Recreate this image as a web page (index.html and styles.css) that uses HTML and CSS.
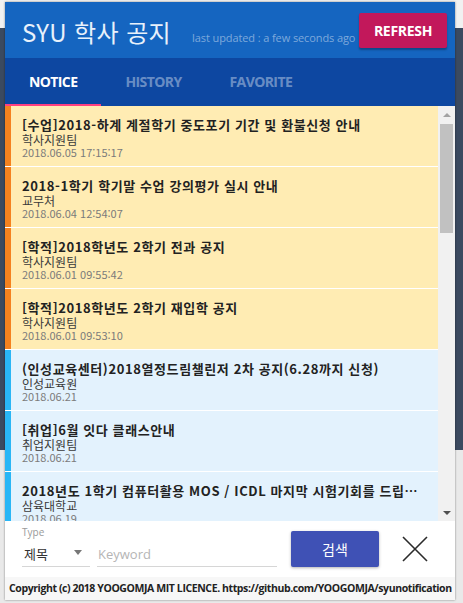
FILE: index.html
```html
<!DOCTYPE html>
<html lang="ko">
<head>
<meta charset="utf-8">
<title>SYU 학사 공지</title>
<link rel="stylesheet" href="styles.css">
</head>
<body>
<div class="popup">
  <header class="appbar">
    <div class="brand">
      <h1 class="title">SYU 학사 공지</h1>
      <span class="updated">last updated : a few seconds ago</span>
    </div>
    <button class="refresh">REFRESH</button>
  </header>
  <nav class="tabs">
    <div class="tab active">NOTICE</div>
    <div class="tab">HISTORY</div>
    <div class="tab">FAVORITE</div>
  </nav>
  <div class="listwrap">
    <ul class="list">
      <li class="item new">
        <div class="item-title">[수업]2018-하계 계절학기 중도포기 기간 및 환불신청 안내</div>
        <div class="item-dept">학사지원팀</div>
        <div class="item-date">2018.06.05 17:15:17</div>
      </li>
      <li class="item new">
        <div class="item-title">2018-1학기 학기말 수업 강의평가 실시 안내</div>
        <div class="item-dept">교무처</div>
        <div class="item-date">2018.06.04 12:54:07</div>
      </li>
      <li class="item new">
        <div class="item-title">[학적]2018학년도 2학기 전과 공지</div>
        <div class="item-dept">학사지원팀</div>
        <div class="item-date">2018.06.01 09:55:42</div>
      </li>
      <li class="item new">
        <div class="item-title">[학적]2018학년도 2학기 재입학 공지</div>
        <div class="item-dept">학사지원팀</div>
        <div class="item-date">2018.06.01 09:53:10</div>
      </li>
      <li class="item old">
        <div class="item-title">(인성교육센터)2018열정드림챌린저 2차 공지(6.28까지 신청)</div>
        <div class="item-dept">인성교육원</div>
        <div class="item-date">2018.06.21</div>
      </li>
      <li class="item old">
        <div class="item-title">[취업]6월 잇다 클래스안내</div>
        <div class="item-dept">취업지원팀</div>
        <div class="item-date">2018.06.21</div>
      </li>
      <li class="item old">
        <div class="item-title">2018년도 1학기 컴퓨터활용 MOS / ICDL 마지막 시험기회를 드립니다</div>
        <div class="item-dept">삼육대학교</div>
        <div class="item-date">2018.06.19</div>
      </li>
    </ul>
    <div class="scrollbar">
      <div class="sb-btn"><span class="tri-up"></span></div>
      <div class="sb-track"><div class="sb-thumb"></div></div>
      <div class="sb-btn"><span class="tri-down"></span></div>
    </div>
  </div>
  <div class="search">
    <div class="field type-field">
      <label class="field-label">Type</label>
      <div class="select">
        <span class="select-value">제목</span>
        <span class="select-arrow"></span>
      </div>
    </div>
    <div class="field keyword-field">
      <div class="input">Keyword</div>
    </div>
    <button class="search-btn">검색</button>
    <button class="close-btn" aria-label="close">
      <svg width="26" height="26" viewBox="0 0 26 26">
        <path d="M1 1 L25 25 M25 1 L1 25" stroke="#2b2b2b" stroke-width="1.6" fill="none"/>
      </svg>
    </button>
  </div>
  <footer class="copy">Copyright (c) 2018 YOOGOMJA MIT LICENCE. https://github.com/YOOGOMJA/syunotification</footer>
</div>
</body>
</html>
```

FILE: styles.css
```css
* { box-sizing: border-box; }

html, body {
  margin: 0;
  height: 603px;
  overflow: hidden;
}

body {
  padding: 2px 0 0 5px;
  font-family: "Noto Sans CJK KR", "Noto Sans", sans-serif;
  background: linear-gradient(to bottom, #f1f1f1 0, #f1f1f1 28px, #3b4a60 28px, #3b4a60 450px, #e9e9e9 450px);
}

.popup {
  width: 450px;
  height: 598px;
  background: #fff;
  display: flex;
  flex-direction: column;
  box-shadow: 0 0 2px rgba(0, 0, 0, 0.45);
}

/* header */
.appbar {
  height: 56px;
  flex: none;
  background: #1565c0;
  display: flex;
  align-items: center;
  padding: 0 8px 0 17px;
}

.brand {
  flex: none;
  display: flex;
  align-items: baseline;
  white-space: nowrap;
  margin-top: 3px;
}

.title {
  margin: 0;
  font-size: 24px;
  font-weight: 400;
  line-height: 28px;
  letter-spacing: 0.4px;
  color: #e8f1fb;
}

.updated {
  margin-left: 21px;
  font-size: 11px;
  color: rgba(255, 255, 255, 0.45);
  font-family: "Open Sans", "Noto Sans", sans-serif;
  letter-spacing: -0.1px;
}

.refresh {
  margin-left: auto;
  flex: none;
  width: 88px;
  height: 35px;
  border: none;
  border-radius: 2px;
  background: #c2185b;
  color: #fff;
  font-family: "Open Sans", sans-serif;
  font-weight: 700;
  font-size: 14px;
  letter-spacing: -0.3px;
  box-shadow: 0 2px 2px rgba(0, 0, 0, 0.3);
  padding: 0;
}

/* tabs */
.tabs {
  height: 48px;
  flex: none;
  background: #0d47a1;
  display: flex;
}

.tab {
  padding: 0 24px;
  height: 48px;
  line-height: 48px;
  font-family: "Open Sans", sans-serif;
  font-weight: 700;
  font-size: 14px;
  letter-spacing: -0.6px;
  color: rgba(255, 255, 255, 0.4);
}

.tab.active {
  color: #fff;
  border-bottom: 2px solid #ff4081;
}

/* list */
.listwrap {
  height: 415px;
  flex: none;
  display: flex;
}

.list {
  flex: 1;
  margin: 0;
  padding: 0;
  list-style: none;
  overflow: hidden;
  background: #fff;
}

.item {
  height: 60px;
  margin-bottom: 1px;
  border-left: 6px solid;
  padding: 11px 20px 0 11px;
}

.item.new {
  background: #ffecb3;
  border-left-color: #f5821f;
}

.item.old {
  background: #e3f2fd;
  border-left-color: #29b6f6;
}

.item-title {
  font-size: 13px;
  font-weight: 700;
  line-height: 16px;
  letter-spacing: 0.6px;
  color: #222;
  white-space: nowrap;
  overflow-x: clip;
  overflow-y: visible;
  text-overflow: ellipsis;
}

.item-dept {
  font-size: 12px;
  line-height: 13px;
  color: #3a3a3a;
}

.item-date {
  font-size: 11px;
  line-height: 12px;
  color: #7b7b7b;
}

/* fake scrollbar */
.scrollbar {
  width: 17px;
  flex: none;
  background: #f1f1f1;
  display: flex;
  flex-direction: column;
}

.sb-btn {
  height: 17px;
  flex: none;
  display: flex;
  align-items: center;
  justify-content: center;
}

.tri-up {
  width: 0;
  height: 0;
  border-left: 4px solid transparent;
  border-right: 4px solid transparent;
  border-bottom: 4px solid #a3a3a3;
}

.tri-down {
  width: 0;
  height: 0;
  border-left: 4px solid transparent;
  border-right: 4px solid transparent;
  border-top: 4px solid #505050;
}

.sb-track {
  flex: 1;
  padding: 1px 2px 0;
}

.sb-thumb {
  height: 109px;
  background: #c1c1c1;
}

/* search row */
.search {
  height: 56px;
  flex: none;
  display: flex;
  align-items: center;
  padding-left: 17px;
}

.field {
  display: flex;
  flex-direction: column;
  margin-bottom: 5px;
}

.type-field {
  width: 68px;
}

.field-label {
  font-family: "Open Sans", sans-serif;
  font-size: 10px;
  line-height: 12px;
  color: #9a9a9a;
  height: 12px;
}

.select {
  height: 29px;
  display: flex;
  align-items: center;
  border-bottom: 1px solid #d6d6d6;
  padding: 2px 8px 0 2px;
}

.select-value {
  font-size: 13px;
  color: #333;
}

.select-arrow {
  margin-left: auto;
  width: 0;
  height: 0;
  border-left: 4px solid transparent;
  border-right: 4px solid transparent;
  border-top: 5px solid #777;
  margin-top: -2px;
}

.keyword-field {
  width: 180px;
  margin-left: 7px;
  padding-top: 12px;
}

.input {
  height: 29px;
  border-bottom: 1px solid #d6d6d6;
  font-family: "Open Sans", sans-serif;
  font-size: 13px;
  color: #b5b5b5;
  padding: 8px 0 0 1px;
  line-height: 16px;
}

.search-btn {
  margin-left: 14px;
  width: 88px;
  height: 36px;
  border: none;
  border-radius: 2px;
  background: #3f51b5;
  color: #fff;
  font-family: "Noto Sans CJK KR", sans-serif;
  font-size: 14px;
  box-shadow: 0 1px 3px rgba(0, 0, 0, 0.3);
  padding: 0;
}

.close-btn {
  margin-left: 23px;
  width: 26px;
  height: 26px;
  border: none;
  background: transparent;
  padding: 0;
  display: flex;
}

/* footer */
.copy {
  height: 23px;
  flex: none;
  background: #f7f7f7;
  padding-left: 4px;
  font-family: "Open Sans", sans-serif;
  font-weight: 700;
  font-size: 10.5px;
  line-height: 23px;
  color: #222;
  white-space: nowrap;
  letter-spacing: -0.4px;
}
```
